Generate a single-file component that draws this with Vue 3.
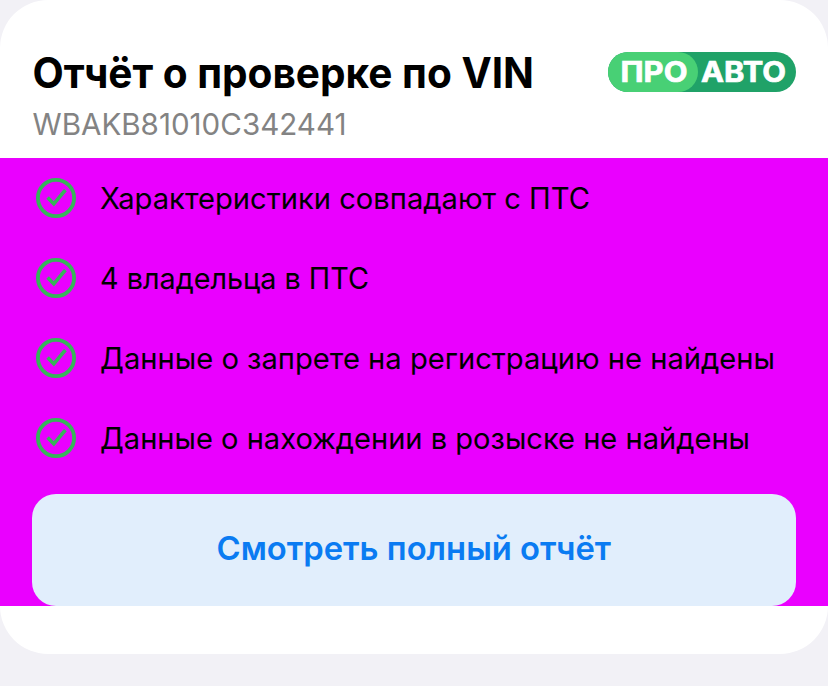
<script setup>
const items = [
  { text: 'Характеристики совпадают с ПТС', width: 490 },
  { text: '4 владельца в ПТС', width: 269 },
  { text: 'Данные о запрете на регистрацию не найдены', width: 675 },
  { text: 'Данные о нахождении в розыске не найдены', width: 650 }
]
</script>

<template>
  <div class="page">
    <section class="card">
      <header class="head">
        <div class="titles">
          <svg class="title" width="530" height="56"><text x="0.5" y="40" textLength="501.5" lengthAdjust="spacingAndGlyphs">Отчёт о проверке по VIN</text></svg>
          <svg class="vin" width="340" height="44"><text x="0.5" y="31" textLength="314" lengthAdjust="spacingAndGlyphs">WBAKB81010C342441</text></svg>
        </div>
        <svg class="logo" width="188" height="40" viewBox="0 0 188 40">
          <rect width="188" height="40" rx="20" fill="#20a268" />
          <path d="M20 0H70A20 20 0 0 1 70 40H20A20 20 0 0 1 20 0Z" fill="#48d075" />
          <text x="12.5" y="30" textLength="67" lengthAdjust="spacingAndGlyphs">ПРО</text>
          <text x="93" y="30" textLength="85" lengthAdjust="spacingAndGlyphs">АВТО</text>
        </svg>
      </header>
      <div class="body">
        <ul class="list">
          <li v-for="item in items" :key="item.text">
            <svg class="check" width="40" height="40" viewBox="0 0 40 40">
              <circle cx="20" cy="20" r="18.1" fill="none" stroke="#38b35a" stroke-width="3.8" />
              <path d="M11.6 19.4L17.8 25.8L29.4 12" fill="none" stroke="#38b35a" stroke-width="3.6" />
            </svg>
            <svg class="line" width="700" height="44"><text x="0" y="33" :textLength="item.width" lengthAdjust="spacingAndGlyphs">{{ item.text }}</text></svg>
          </li>
        </ul>
        <button class="button">
          <svg width="400" height="60"><text x="2.5" y="40" textLength="394.5" lengthAdjust="spacingAndGlyphs">Смотреть полный отчёт</text></svg>
        </button>
      </div>
    </section>
  </div>
</template>

<style>
body { margin: 0; background: #f2f1f6; }
</style>
<style scoped>
.page { height: 686px; overflow: hidden; background: #f2f1f6; font-family: Inter, sans-serif; }
svg { display: block; flex: none; overflow: visible; }
.card { height: 654px; background: #fff; border-radius: 48px; overflow: hidden; }
.head { height: 158px; box-sizing: border-box; padding: 48px 32px 0; display: flex; justify-content: space-between; }
.titles { width: 540px; }
.title { font-size: 42px; font-weight: 700; }
.vin { font-size: 29.5px; fill: #838383; }
.logo { margin-top: 4px; font: 700 28px Inter, sans-serif; }
.logo text { fill: #fff; stroke: #fff; stroke-width: 0.7px; }
.body { height: 448px; background: #ea00ff; }
.list { list-style: none; margin: 0; padding: 0 0 0 36px; height: 336px; }
.list li { display: flex; align-items: center; gap: 24px; height: 80px; }
.line { font-size: 29.5px; }
.button { display: flex; align-items: center; justify-content: center; width: 764px; height: 112px; margin: 0 32px; padding: 0; border: 0; border-radius: 24px; background: #e1eefc; font: 600 33px Inter, sans-serif; }
.button text { fill: #0a7bf2; }
</style>
